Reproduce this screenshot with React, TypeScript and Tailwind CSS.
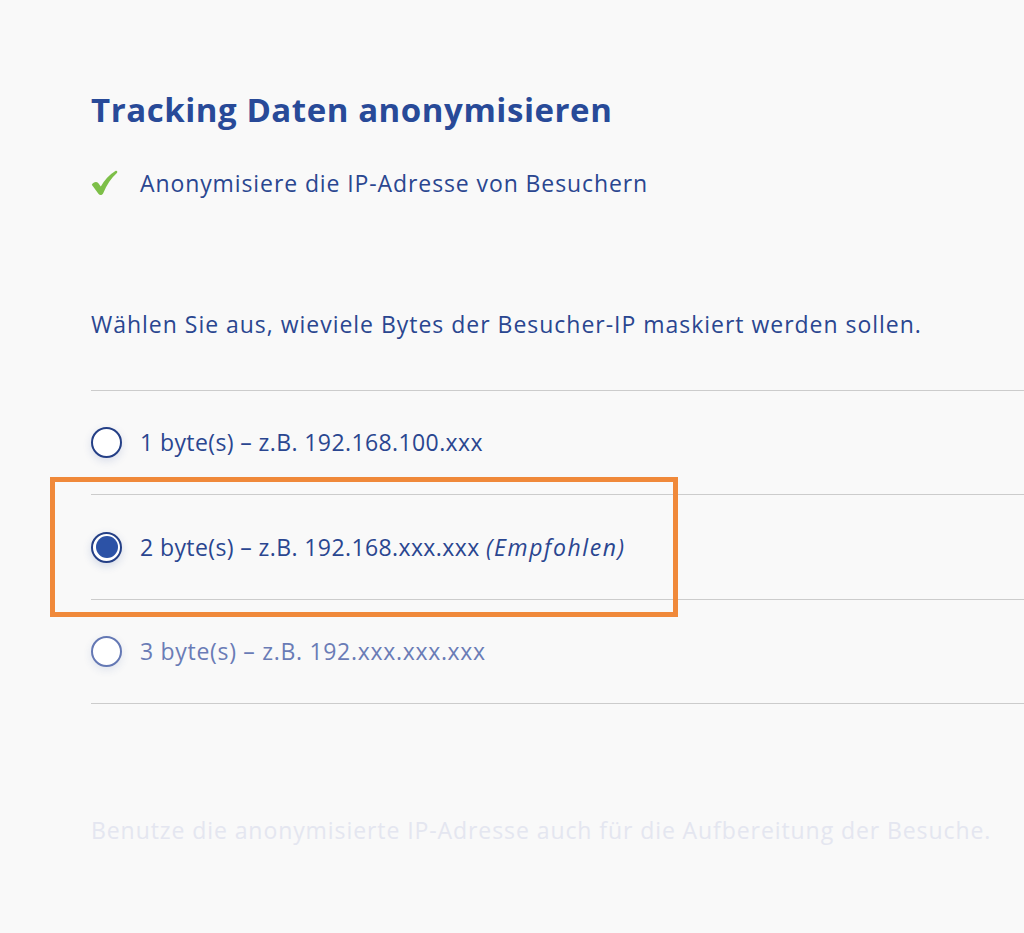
import React from "react";

function Radio({ checked, faded }: { checked?: boolean; faded?: boolean }) {
  if (checked) {
    return (
      <span className="flex h-[31px] w-[31px] shrink-0 items-center justify-center rounded-full border-2 border-[#243f86] bg-white shadow-[0_3px_8px_rgba(40,70,150,0.18)]">
        <span className="h-[22px] w-[22px] rounded-full bg-[#2c52a6]" />
      </span>
    );
  }
  return (
    <span
      className={
        faded
          ? "h-[31px] w-[31px] shrink-0 rounded-full border-2 border-[#6478b4] bg-white shadow-[0_3px_8px_rgba(40,70,150,0.12)]"
          : "h-[31px] w-[31px] shrink-0 rounded-full border-2 border-[#243f86] bg-white shadow-[0_3px_8px_rgba(40,70,150,0.15)]"
      }
    />
  );
}

export default function App() {
  const font = { fontFamily: "'Open Sans', 'Noto Sans', sans-serif" };
  return (
    <div
      className="min-h-[933px] w-[1024px] overflow-hidden bg-[#f9f9f9] pl-[91px] pt-[88px]"
      style={font}
    >
      <h1 className="text-[33px] font-bold leading-[44px] tracking-[0.55px] text-[#284a98]">
        Tracking Daten anonymisieren
      </h1>
      <div className="mt-[36px] flex items-center">
        <span className="w-[49px]">
          <svg width="27" height="26" viewBox="0 0 27 26">
            <path
              d="M0.8 14.8 C2.5 11.8 5.6 11.2 7.4 13.2 L9.8 16.6 C13.2 9.8 18.4 4.6 24.4 0.9 C25.9 0.2 27 1.7 25.9 2.9 C20.4 7.8 15.6 14.6 12.2 23.2 C11.4 25.2 8.8 25.6 7.6 23.9 Z"
              fill="#7dbf48"
            />
          </svg>
        </span>
        <span className="text-[23px] leading-[30px] tracking-[0.9px] text-[#2a4690]">
          Anonymisiere die IP-Adresse von Besuchern
        </span>
      </div>
      <p className="mt-[111px] text-[23px] leading-[30px] tracking-[0.98px] text-[#2a4690]">
        Wählen Sie aus, wieviele Bytes der Besucher-IP maskiert werden sollen.
      </p>
      <div className="relative mt-[51px]">
        <div className="flex h-[104px] items-center gap-[18px] border-t border-[#cccccc]">
          <Radio />
          <span className="text-[23px] tracking-[0.4px] text-[#2a4690]">
            1 byte(s) – z.B. 192.168.100.xxx
          </span>
        </div>
        <div className="flex h-[105px] items-center gap-[18px] border-t border-[#cccccc]">
          <Radio checked />
          <span className="text-[23px] tracking-[0.4px] text-[#2a4690]">
            2 byte(s) – z.B. 192.168.xxx.xxx{" "}
            <em className="tracking-[1.6px]">(Empfohlen)</em>
          </span>
        </div>
        <div className="flex h-[105px] items-center gap-[18px] border-y border-[#cccccc]">
          <Radio faded />
          <span className="text-[23px] tracking-[0.7px] text-[#6a7cb6]">
            3 byte(s) – z.B. 192.xxx.xxx.xxx
          </span>
        </div>
        <div className="pointer-events-none absolute left-[-41px] top-[87px] h-[140px] w-[628px] border-[5px] border-[#f0893a]" />
      </div>
      <p className="mt-[111px] text-[23px] leading-[30px] tracking-[0.92px] text-[#e4e6f0]">
        Benutze die anonymisierte IP-Adresse auch für die Aufbereitung der Besuche.
      </p>
    </div>
  );
}
